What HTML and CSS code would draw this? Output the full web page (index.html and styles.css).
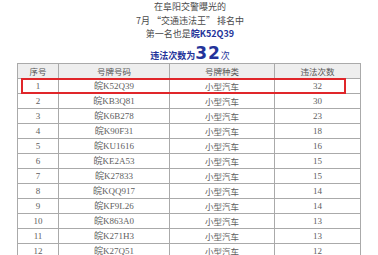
FILE: index.html
```html
<!DOCTYPE html>
<html lang="zh">
<head>
<meta charset="utf-8">
<link rel="stylesheet" href="styles.css">
</head>
<body>
<div class="intro">
  <div class="line">在阜阳交警曝光的</div>
  <div class="line">7月 “交通违法王” 排名中</div>
  <div class="line">第一名也是<span class="hl">皖K52Q39</span></div>
  <div class="line big"><span class="hl">违法次数为</span><span class="num">32</span><span class="blue">次</span></div>
</div>
<div class="wrap">
  <table class="rank">
    <colgroup><col class="c1"><col class="c2"><col class="c3"><col class="c4"></colgroup>
    <thead>
      <tr><th>序号</th><th>号牌号码</th><th>号牌种类</th><th>违法次数</th></tr>
    </thead>
    <tbody>
      <tr><td>1</td><td>皖K52Q39</td><td>小型汽车</td><td>32</td></tr>
      <tr><td>2</td><td>皖KB3Q81</td><td>小型汽车</td><td>30</td></tr>
      <tr><td>3</td><td>皖K6B278</td><td>小型汽车</td><td>23</td></tr>
      <tr><td>4</td><td>皖K90F31</td><td>小型汽车</td><td>18</td></tr>
      <tr><td>5</td><td>皖KU1616</td><td>小型汽车</td><td>16</td></tr>
      <tr><td>6</td><td>皖KE2A53</td><td>小型汽车</td><td>15</td></tr>
      <tr><td>7</td><td>皖K27833</td><td>小型汽车</td><td>15</td></tr>
      <tr><td>8</td><td>皖KQQ917</td><td>小型汽车</td><td>14</td></tr>
      <tr><td>9</td><td>皖KF9L26</td><td>小型汽车</td><td>14</td></tr>
      <tr><td>10</td><td>皖K863A0</td><td>小型汽车</td><td>13</td></tr>
      <tr><td>11</td><td>皖K271H3</td><td>小型汽车</td><td>13</td></tr>
      <tr><td>12</td><td>皖K27Q51</td><td>小型汽车</td><td>12</td></tr>
    </tbody>
  </table>
  <div class="mark"></div>
</div>
</body>
</html>
```
FILE: styles.css
```css
html, body {
  margin: 0;
  padding: 0;
  background: #fff;
  overflow: hidden;
}
body {
  font-family: "Noto Sans CJK SC", sans-serif;
  color: #4a4a4a;
}
.intro {
  text-align: center;
  font-size: 9px;
  padding-left: 2px;
}
.line {
  line-height: 13.5px;
  height: 13.5px;
}
.line.big {
  margin-top: 3.5px;
  height: 18px;
  line-height: 18px;
}
.hl {
  color: #24339a;
  font-weight: bold;
}
.blue {
  color: #24339a;
}
.num {
  color: #24339a;
  font-weight: bold;
  font-size: 17px;
  font-family: "DejaVu Sans", sans-serif;
  letter-spacing: 1px;
}
.wrap {
  position: relative;
  margin: 1px 0 0 17px;
  width: 343px;
}
.rank {
  border-collapse: collapse;
  width: 343px;
  table-layout: fixed;
  font-size: 9px;
  color: #606060;
}
.c1 { width: 41px; }
.c2 { width: 111px; }
.c3 { width: 105px; }
.c4 { width: 86px; }
.rank th, .rank td {
  border: 1px solid #aaa;
  text-align: center;
  padding: 0;
  height: 14px;
  line-height: 14px;
}
.rank th {
  background: #eeeeee;
  font-weight: normal;
  font-family: "Noto Sans CJK SC", sans-serif;
  font-size: 8.5px;
  color: #555;
}
.rank td {
  font-family: "Liberation Serif", "Noto Sans CJK SC", serif;
}
.rank tbody tr td:nth-child(3) {
  font-family: "Noto Sans CJK SC", sans-serif;
  font-size: 8.5px;
}
.mark {
  position: absolute;
  left: 4px;
  top: 15px;
  width: 321px;
  height: 12px;
  border: 2px solid #e0262a;
}
```
